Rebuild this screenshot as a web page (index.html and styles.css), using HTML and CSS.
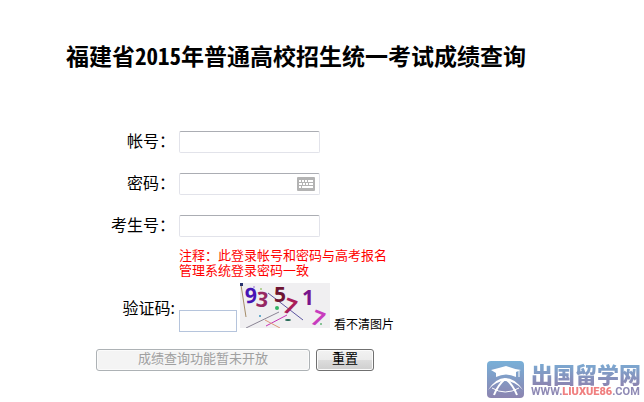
FILE: index.html
```
<!DOCTYPE html>
<html lang="zh-CN">
<head>
    <meta charset="UTF-8">
    <meta name="viewport" content="width=device-width, initial-scale=1.0">
    <title>福建省2015年普通高校招生统一考试成绩查询</title>
    <link rel="stylesheet" href="styles.css">
</head>
<body>
    <h1>福建省2015年普通高校招生统一考试成绩查询</h1>

    <form class="query-form" id="queryForm">
        <div class="form-row">
            <label for="account">帐号：</label>
            <input type="text" class="input-field" name="account" id="account">
        </div>
        <div class="form-row">
            <label for="password">密码：</label>
            <div class="password-container">
                <input type="password" class="input-field" name="password" id="password">
                <button type="button" class="keyboard-button" aria-label="软键盘">
                    <svg width="18" height="14" viewBox="0 0 18 14" shape-rendering="crispEdges">
                        <rect width="18" height="14" fill="#b3b3b3"/>
                        <path d="M2 3h2v2h-2zM5 3h2v2h-2zM8 3h2v2h-2zM11 3h5v2h-5zM2 6h3v2h-3zM6 6h2v2h-2zM9 6h2v2h-2zM12 6h4v2h-4zM2 9h2v2h-2zM5 9h11v2h-11z" fill="#fff"/>
                    </svg>
                </button>
            </div>
        </div>
        <div class="form-row">
            <label for="examNumber">考生号：</label>
            <input type="text" class="input-field" name="examNumber" id="examNumber">
        </div>
        <p class="note">注释：此登录帐号和密码与高考报名<br>管理系统登录密码一致</p>
        <div class="form-row captcha-row">
            <label for="captcha">验证码:</label>
            <div class="captcha-container">
                <input type="text" class="input-field captcha-field" name="captcha" id="captcha">
                <svg class="captcha-image" width="90" height="45" viewBox="0 0 90 45" role="img" aria-label="验证码图片">
                    <rect width="90" height="45" fill="#f0eff1"/>
                    <g fill="none" stroke-width="1">
                        <path d="M1 2L6 34" stroke="#a58c68"/>
                        <path d="M6 45L39 29" stroke="#8a8494"/>
                        <path d="M28 10L63 37" stroke="#5c55a0"/>
                        <path d="M26 43L47 32" stroke="#c832b4"/>
                        <path d="M25 37L40 45" stroke="#dc9678"/>
                    </g>
                    <g class="captcha-digits">
                        <text x="5" y="20" fill="#4614b4" transform="rotate(-4 10 14)">9</text>
                        <text x="16" y="24" fill="#962864" transform="rotate(6 22 18)">3</text>
                        <text x="34" y="19" fill="#6e1432">5</text>
                        <text x="44" y="31" fill="#aa1e5a" transform="rotate(20 50 24)">7</text>
                        <text x="62" y="22" fill="#78148c">1</text>
                        <text x="72" y="43" fill="#c83cbe" transform="rotate(22 78 36)">7</text>
                    </g>
                    <rect width="3" height="3" fill="#28326e"/>
                    <circle cx="14" cy="4" r="1" fill="#b496dc"/>
                    <circle cx="21" cy="6" r="1" fill="#a0c878"/>
                    <circle cx="37" cy="25" r="2" fill="#32b464"/>
                    <circle cx="20" cy="33" r="1" fill="#3c96be"/>
                    <ellipse cx="48" cy="37" rx="3" ry="1" fill="#1e6450"/>
                    <circle cx="81" cy="41" r="1" fill="#64b478"/>
                </svg>
                <a href="#" class="refresh-link">看不清图片</a>
            </div>
        </div>
        <div class="button-row">
            <button type="submit" class="form-button submit-button" disabled>成绩查询功能暂未开放</button>
            <button type="reset" class="form-button">重置</button>
        </div>
    </form>

    <div class="site-logo">
        <svg width="37" height="37" viewBox="0 0 37 37">
            <defs>
                <linearGradient id="logoFill" x1="0" y1="0" x2="0" y2="1">
                    <stop offset="0" stop-color="#78b0d8"/>
                    <stop offset="1" stop-color="#8c84b0"/>
                </linearGradient>
            </defs>
            <rect width="37" height="37" rx="4" fill="url(#logoFill)"/>
            <path d="M4 9Q12 7 19 5Q27 8 34 9L29 11V16Q19 11 9 16V12Z" fill="#fff"/>
            <path d="M32 10V16" stroke="#fff" stroke-width="1"/>
            <path d="M1 29Q9 17 18 17Q28 17 36 29Q28 20 18 20Q9 20 1 29Z" fill="#fff"/>
            <path d="M18 18Q11 24 7 34M19 18Q26 24 30 34" fill="none" stroke="#fff" stroke-width="2"/>
            <path d="M5 27Q18 35 32 27" fill="none" stroke="#fff" stroke-width="1"/>
        </svg>
        <div class="logo-text">
            <span class="logo-name">出国留学网</span>
            <span class="logo-url">WWW.<b>LIUXUE86</b>.COM</span>
        </div>
    </div>
</body>
</html>
```
FILE: styles.css
```
body {
    margin: 0;
    background-color: white;
    color: black;
    font-family: "Noto Sans CJK SC", sans-serif;
    font-size: 16px;
}

h1 {
    margin: 0;
    padding: 38px 66px 0;
    font-size: 23px;
    line-height: 34px;
    font-weight: bold;
    font-feature-settings: "hwid";
}

.query-form {
    padding-top: 59px;
}

.form-row {
    display: grid;
    grid-template-columns: 175px 1fr;
    column-gap: 4px;
    align-items: center;
    margin-bottom: 20px;
}

.form-row label {
    padding-bottom: 4px;
    text-align: right;
    line-height: 18px;
}

.input-field {
    box-sizing: border-box;
    width: 141px;
    height: 22px;
    padding: 1px 3px;
    border: 1px solid #e2e3ea;
    border-top-color: #abadb3;
    border-radius: 2px;
    background-color: white;
    font-size: 13px;
}

.password-container {
    display: flex;
    align-items: center;
    position: relative;
    width: 141px;
}

.keyboard-button {
    display: flex;
    position: absolute;
    right: 5px;
    padding: 0;
    border: none;
    border-radius: 1px;
    overflow: hidden;
    background: none;
    cursor: pointer;
}

.note {
    margin: -10px 0 6px 179px;
    color: red;
    font-size: 13px;
    line-height: 15px;
}

.captcha-row {
    margin-bottom: 17px;
}

.captcha-row label {
    padding-bottom: 2px;
}

.captcha-container {
    display: flex;
    align-items: flex-end;
}

.captcha-field {
    width: 58px;
    border-color: #b5c4dc;
    border-radius: 0;
}

.captcha-image {
    margin: 0 4px 4px 3px;
}

.captcha-digits {
    font-family: "Noto Sans", sans-serif;
    font-size: 21px;
    font-weight: bold;
}

.refresh-link {
    color: black;
    font-size: 12px;
    line-height: 16px;
    text-decoration: none;
}

.button-row {
    display: flex;
    gap: 6px;
    padding-left: 96px;
}

.form-button {
    box-sizing: border-box;
    width: 58px;
    height: 22px;
    padding: 0 0 4px;
    border: 1px solid #707070;
    border-radius: 3px;
    background: linear-gradient(#f2f2f2 0%, #ebebeb 50%, #dddddd 50%, #cfcfcf 100%);
    box-shadow: inset 0 0 0 1px #fbfbfb;
    color: black;
    font-family: inherit;
    font-size: 13px;
    line-height: 16px;
}

.submit-button {
    width: 214px;
}

.form-button:disabled {
    border-color: #adb2b5;
    background: #f4f4f4;
    color: #a0a0a0;
}

/* watermark in the page corner */
.site-logo {
    display: flex;
    align-items: flex-end;
    gap: 7px;
    position: fixed;
    right: 3px;
    bottom: 4px;
}

.logo-text {
    display: flex;
    flex-direction: column;
}

.logo-name {
    background: linear-gradient(#78b0d8, #8c84b0);
    background-clip: text;
    -webkit-background-clip: text;
    color: transparent;
    font-size: 22px;
    font-weight: 900;
    line-height: 26px;
}

.logo-url {
    color: #8f8ab5;
    font-family: Roboto, "Liberation Sans", sans-serif;
    font-size: 11px;
    font-weight: bold;
    line-height: 12px;
}

.logo-url b {
    color: #f08080;
}
```
